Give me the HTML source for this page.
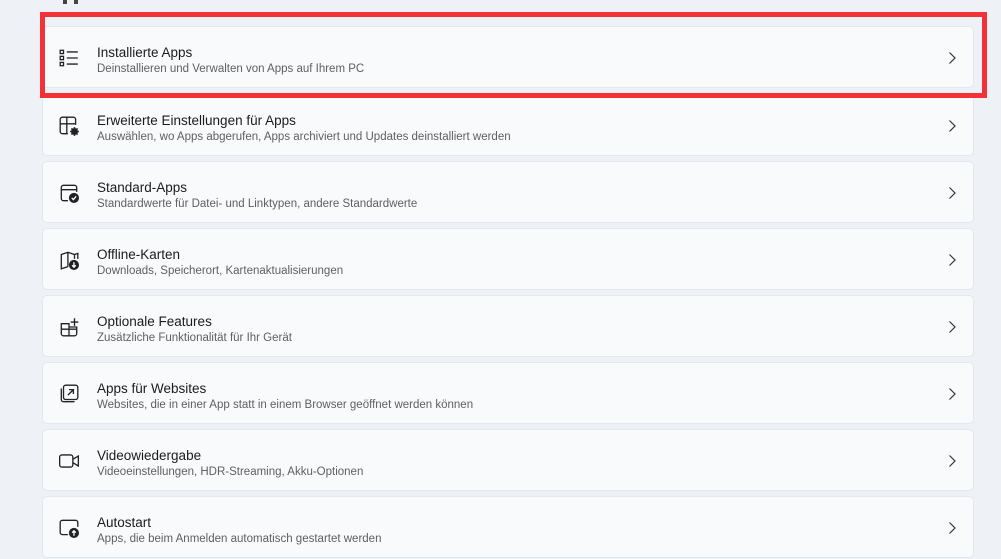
<!DOCTYPE html>
<html><head><meta charset="utf-8"><style>
*{margin:0;padding:0;box-sizing:border-box}
body{width:1001px;height:559px;overflow:hidden;background:#eef2f7;font-family:"Segoe UI","Liberation Sans",sans-serif;position:relative}
.card{position:absolute;left:42px;width:932px;height:62px;background:#f8fafc;border:1px solid #e3e8ee;border-radius:5px}
.ic{position:absolute;left:15px;top:20px;width:22px;height:22px}
.t{position:absolute;left:54px;top:18px;font-size:13.5px;color:#1b1b1b}
.s{position:absolute;left:54px;top:36px;font-size:11.5px;color:#5f5f5f}
.ch{position:absolute;left:903px;top:24px;width:12px;height:14px}
.red{position:absolute;left:40px;top:12px;width:947px;height:86px;border:5px solid #f23237}
</style></head><body>
<div style="position:absolute;left:63px;top:0;width:4px;height:4px;background:#444"></div>
<div style="position:absolute;left:74px;top:0;width:4px;height:4px;background:#444"></div>

<div class="card" style="top:26px"><svg class="ic" viewBox="0 0 20 20" fill="none" stroke="#222" stroke-width="1.2"><rect x="2" y="3" width="3" height="3"/><rect x="2" y="8.5" width="3" height="3"/><rect x="2" y="14" width="3" height="3"/><path d="M8 4.5h10M8 10h10M8 15.5h10"/></svg><div class="t">Installierte Apps</div><div class="s">Deinstallieren und Verwalten von Apps auf Ihrem PC</div><svg class="ch" viewBox="0 0 12 14" fill="none" stroke="#333" stroke-width="1.2"><path d="M3.5 1.5l5.5 5.5-5.5 5.5"/></svg></div>

<div class="card" style="top:94px"><svg class="ic" viewBox="0 0 20 20" fill="none" stroke="#222" stroke-width="1.2"><path d="M9 17H4a2 2 0 0 1-2-2V4a2 2 0 0 1 2-2h10a2 2 0 0 1 2 2v5M2 8h14M8 2v15"/><circle cx="15" cy="15" r="2.5" fill="#222"/><path d="M15 11v8M11 15h8M12.2 12.2l5.6 5.6M17.8 12.2l-5.6 5.6" stroke-width="1.4"/></svg><div class="t">Erweiterte Einstellungen für Apps</div><div class="s">Auswählen, wo Apps abgerufen, Apps archiviert und Updates deinstalliert werden</div><svg class="ch" viewBox="0 0 12 14" fill="none" stroke="#333" stroke-width="1.2"><path d="M3.5 1.5l5.5 5.5-5.5 5.5"/></svg></div>

<div class="card" style="top:161px"><svg class="ic" viewBox="0 0 20 20" fill="none" stroke="#222" stroke-width="1.2"><path d="M9 17H5a2 2 0 0 1-2-2V5a2 2 0 0 1 2-2h10a2 2 0 0 1 2 2v4M3 7h14"/><circle cx="14.5" cy="14.5" r="4" fill="#222"/><path d="M12.5 14.5l1.5 1.5 2.5-3" stroke="#fff"/></svg><div class="t">Standard-Apps</div><div class="s">Standardwerte für Datei- und Linktypen, andere Standardwerte</div><svg class="ch" viewBox="0 0 12 14" fill="none" stroke="#333" stroke-width="1.2"><path d="M3.5 1.5l5.5 5.5-5.5 5.5"/></svg></div>

<div class="card" style="top:228px"><svg class="ic" viewBox="0 0 20 20" fill="none" stroke="#222" stroke-width="1.2"><path d="M9 16l-6 2V5l6-2 6 2 3-1v5M9 3v13M15 5v4"/><circle cx="14.5" cy="14.5" r="4" fill="#222"/><path d="M14.5 12v4.5M12.8 14.8l1.7 1.7 1.7-1.7" stroke="#fff"/></svg><div class="t">Offline-Karten</div><div class="s">Downloads, Speicherort, Kartenaktualisierungen</div><svg class="ch" viewBox="0 0 12 14" fill="none" stroke="#333" stroke-width="1.2"><path d="M3.5 1.5l5.5 5.5-5.5 5.5"/></svg></div>

<div class="card" style="top:295px"><svg class="ic" viewBox="0 0 20 20" fill="none" stroke="#222" stroke-width="1.2"><path d="M3 7h7v11H5a2 2 0 0 1-2-2zM3 12h14M10 12v6h5a2 2 0 0 0 2-2v-6h-7zM15 2v7M11.5 5.5h7"/></svg><div class="t">Optionale Features</div><div class="s">Zusätzliche Funktionalität für Ihr Gerät</div><svg class="ch" viewBox="0 0 12 14" fill="none" stroke="#333" stroke-width="1.2"><path d="M3.5 1.5l5.5 5.5-5.5 5.5"/></svg></div>

<div class="card" style="top:362px"><svg class="ic" viewBox="0 0 20 20" fill="none" stroke="#222" stroke-width="1.2"><rect x="5" y="2" width="13" height="13" rx="2"/><path d="M3 5v10a2 2 0 0 0 2 2h10M9 11l5-5M10 6h4v4"/></svg><div class="t">Apps für Websites</div><div class="s">Websites, die in einer App statt in einem Browser geöffnet werden können</div><svg class="ch" viewBox="0 0 12 14" fill="none" stroke="#333" stroke-width="1.2"><path d="M3.5 1.5l5.5 5.5-5.5 5.5"/></svg></div>

<div class="card" style="top:429px"><svg class="ic" viewBox="0 0 20 20" fill="none" stroke="#222" stroke-width="1.2"><rect x="1.5" y="4.5" width="12" height="11" rx="2"/><path d="M13.5 8.5l5-3v9l-5-3"/></svg><div class="t">Videowiedergabe</div><div class="s">Videoeinstellungen, HDR-Streaming, Akku-Optionen</div><svg class="ch" viewBox="0 0 12 14" fill="none" stroke="#333" stroke-width="1.2"><path d="M3.5 1.5l5.5 5.5-5.5 5.5"/></svg></div>

<div class="card" style="top:496px"><svg class="ic" viewBox="0 0 20 20" fill="none" stroke="#222" stroke-width="1.2"><path d="M9 16H4a2 2 0 0 1-2-2V5a2 2 0 0 1 2-2h12a2 2 0 0 1 2 2v4"/><circle cx="14.5" cy="14.5" r="4" fill="#222"/><path d="M14.5 17v-4.5M12.8 14.2l1.7-1.7 1.7 1.7" stroke="#fff"/></svg><div class="t">Autostart</div><div class="s">Apps, die beim Anmelden automatisch gestartet werden</div><svg class="ch" viewBox="0 0 12 14" fill="none" stroke="#333" stroke-width="1.2"><path d="M3.5 1.5l5.5 5.5-5.5 5.5"/></svg></div>

<div class="red"></div>
</body></html>
